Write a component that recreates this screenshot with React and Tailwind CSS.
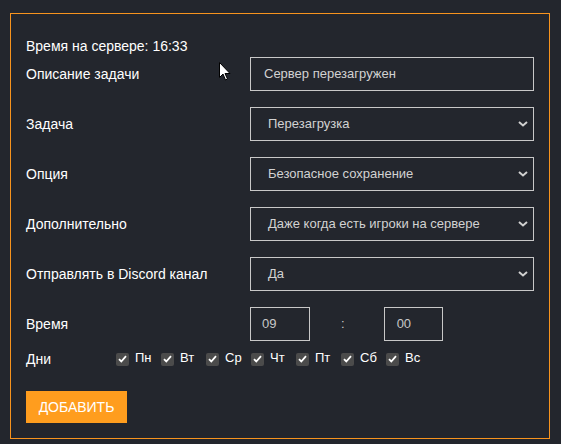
import React from "react"

const days = ["Пн", "Вт", "Ср", "Чт", "Пт", "Сб", "Вс"]

const Chevron = () => (
  <svg width="10" height="6" viewBox="0 0 10 6" className="absolute right-[5px] top-1/2 -translate-y-1/2">
    <path d="M1 1l4 3.5L9 1" fill="none" stroke="#d0d0d0" strokeWidth="2" />
  </svg>
)

const SelectBox = ({ value }) => (
  <div className="relative flex h-[34px] items-center border border-[#c8c8c8] pl-[17px] text-[13px] text-[#d2d2d2]">
    {value}
    <Chevron />
  </div>
)

const Check = () => (
  <span className="flex h-[13px] w-[13px] items-center justify-center rounded-[2px] bg-[#4b4b4b]">
    <svg width="9" height="8" viewBox="0 0 9 8">
      <path d="M1 4.2l2.3 2.3L8 1.2" fill="none" stroke="#fff" strokeWidth="1.8" />
    </svg>
  </span>
)

export default function App() {
  const rows = [
    { label: "Задача", value: "Перезагрузка" },
    { label: "Опция", value: "Безопасное сохранение" },
    { label: "Дополнительно", value: "Даже когда есть игроки на сервере" },
    { label: "Отправлять в Discord канал", value: "Да" },
  ]

  return (
    <div
      className="min-h-[444px] w-[561px] bg-[#23262d] pb-[6px] pl-[10px] pr-[11px] pt-[13px] text-white"
      style={{ fontFamily: '"Liberation Sans", Arial, sans-serif' }}
    >
      <div className="relative border border-[#f7931e] pb-[15px] pl-[15px] pr-[15px] pt-[24px]">
        <div className="mb-[3px] h-[16px] text-[14px] leading-[16px]">Время на сервере: 16:33</div>

        <div className="flex flex-col gap-[16px]">
          <div className="grid grid-cols-[224px_284px] items-center">
            <span className="text-[14px]">Описание задачи</span>
            <div className="flex h-[34px] items-center border border-[#c8c8c8] pl-[13px] text-[13px] text-[#d2d2d2]">
              Сервер перезагружен
            </div>
          </div>
          {rows.map((r) => (
            <div key={r.label} className="grid grid-cols-[224px_284px] items-center">
              <span className="text-[14px]">{r.label}</span>
              <SelectBox value={r.value} />
            </div>
          ))}
          <div className="grid grid-cols-[224px_284px] items-center">
            <span className="text-[14px]">Время</span>
            <div className="flex items-center">
              <div className="flex h-[34px] w-[60px] items-center border border-[#c8c8c8] pl-[11px] text-[13px] text-[#c8c8c8]">09</div>
              <span className="ml-[31px] mr-[39px] text-[13px] text-[#c8c8c8]">:</span>
              <div className="flex h-[34px] w-[59px] items-center border border-[#c8c8c8] pl-[12px] text-[13px] text-[#c8c8c8]">00</div>
            </div>
          </div>
        </div>

        <div className="mt-[10px] flex h-[16px] items-center">
          <span className="w-[90px] text-[14px]">Дни</span>
          {days.map((d) => (
            <label key={d} className="flex w-[45px] items-center gap-[6px]">
              <Check />
              <span className="-mt-[3px] text-[13px]">{d}</span>
            </label>
          ))}
        </div>

        <button className="mt-[24px] h-[32px] w-[101px] bg-[#ff9d1e] text-[14px] text-white">ДОБАВИТЬ</button>

        <svg width="12" height="19" viewBox="0 0 12 19" className="absolute left-[208px] top-[48px]">
          <path d="M0.5 0.5v15l3.5-3.5 2.5 6 2-1-2.5-5.5h5z" fill="#fff" stroke="#000" strokeWidth="1" />
        </svg>
      </div>
    </div>
  )
}
